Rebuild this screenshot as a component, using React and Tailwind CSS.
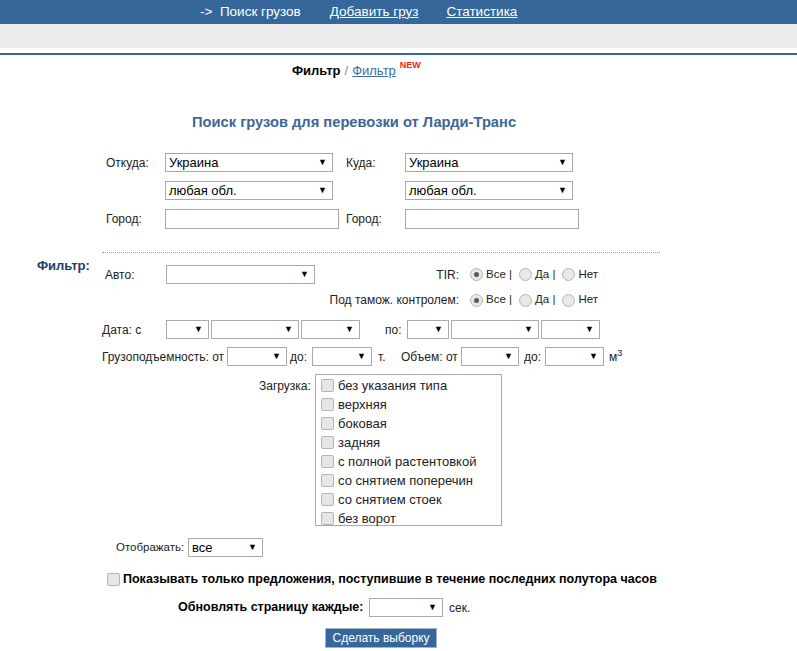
import React from 'react';

const FONT = { fontFamily: '"Liberation Sans", Arial, sans-serif' };

const Select = ({ w, value = '', h = 'h-[19px]' }) => (
  <div className={`${w} ${h} shrink-0 flex items-center justify-between border border-[#a9a9a9] bg-white pl-[3px] pr-[5px] text-[13px] text-black`}>
    <span className="leading-none">{value}</span>
    <span className="text-[9px] leading-none">▼</span>
  </div>
);

const Radio = ({ checked }) => (
  <span className="inline-flex items-center justify-center w-[13px] h-[13px] rounded-full border border-[#b5b5b5] bg-[#e8e8e8] shrink-0">
    {checked && <span className="w-[5px] h-[5px] rounded-full bg-[#5a5a5a]" />}
  </span>
);

const Check = () => (
  <span className="inline-block w-[13px] h-[13px] rounded-[2px] border border-[#b5b5b5] bg-[#e6e6e6] shrink-0" />
);

const RadioGroup = () => (
  <div className="ml-[11px] flex items-center text-[11.5px] text-[#222]">
    <Radio checked />
    <span className="ml-[3px]">Все&nbsp;|</span>
    <span className="ml-[7px] flex"><Radio /></span>
    <span className="ml-[3px]">Да&nbsp;|</span>
    <span className="ml-[7px] flex"><Radio /></span>
    <span className="ml-[3px]">Нет</span>
  </div>
);

const zagruzka = [
  'без указания типа',
  'верхняя',
  'боковая',
  'задняя',
  'с полной растентовкой',
  'со снятием поперечин',
  'со снятием стоек',
  'без ворот'
];

export default function App() {
  return (
    <div className="w-[797px] min-h-[651px] bg-white text-[12px] text-[#222]" style={FONT}>
      {/* верхнее меню */}
      <div className="h-[24px] bg-[#35679a] flex items-center pl-[200px] text-[13.5px] text-white">
        <span>-&gt;&nbsp; Поиск грузов</span>
        <a className="ml-[29px] underline">Добавить груз</a>
        <a className="ml-[28px] underline">Статистика</a>
      </div>
      <div className="h-[24px] bg-[#ececec]" />
      <div className="mt-[5px] h-[2px] bg-[#35679a]" />

      <div className="mt-[8px] h-[16px] flex items-center pl-[292px] text-[13px]">
        <b className="text-black">Фильтр</b>
        <span className="mx-[4px] text-[#888]">/</span>
        <a className="underline text-[#3a6ea5]">Фильтр</a>
        <sup className="ml-[4px] -mt-[4px] text-[9px] font-bold text-[#ff2020]">NEW</sup>
      </div>

      <h1 className="mt-[35px] h-[16px] flex items-center pl-[192px] text-[14.7px] font-bold text-[#3a6795]">
        Поиск грузов для перевозки от Ларди-Транс
      </h1>

      {/* откуда / куда */}
      <div className="mt-[23px] pl-[106px] flex flex-col gap-[9px]">
        <div className="flex items-center">
          <span className="w-[59px]">Откуда:</span>
          <Select w="w-[168px]" value="Украина" />
          <span className="ml-[13px] w-[59px]">Куда:</span>
          <Select w="w-[168px]" value="Украина" />
        </div>
        <div className="flex items-center">
          <span className="w-[59px]" />
          <Select w="w-[168px]" value="любая обл." />
          <span className="ml-[13px] w-[59px]" />
          <Select w="w-[168px]" value="любая обл." />
        </div>
        <div className="flex items-center">
          <span className="w-[59px]">Город:</span>
          <div className="w-[174px] h-[20px] border border-[#a9a9a9] bg-white" />
          <span className="ml-[7px] w-[59px]">Город:</span>
          <div className="w-[174px] h-[20px] border border-[#a9a9a9] bg-white" />
        </div>
      </div>

      <div className="mt-[23px] ml-[102px] w-[558px] border-t border-dotted border-[#999]" />

      {/* фильтр */}
      <div className="mt-[12px] pl-[37px] flex items-start">
        <b className="w-[68px] -mt-[9px] text-[13px] text-[#1b3e6a]">Фильтр:</b>
        <div className="flex items-center h-[19px]">
          <span className="w-[61px]">Авто:</span>
          <Select w="w-[149px]" />
          <span className="w-[144px] text-right">TIR:</span>
          <RadioGroup />
        </div>
      </div>

      <div className="mt-[7px] h-[18px] pl-[315px] flex items-center">
        <span className="w-[144px] text-right whitespace-nowrap">Под тамож. контролем:</span>
        <RadioGroup />
      </div>

      <div className="mt-[11px] pl-[102px] flex items-center">
        <span className="w-[64px]">Дата: с</span>
        <Select w="w-[43px]" />
        <span className="ml-[2px]"><Select w="w-[88px]" /></span>
        <span className="ml-[2px]"><Select w="w-[59px]" /></span>
        <span className="ml-[25px] w-[22px]">по:</span>
        <Select w="w-[42px]" />
        <span className="ml-[2px]"><Select w="w-[88px]" /></span>
        <span className="ml-[2px]"><Select w="w-[59px]" /></span>
      </div>

      <div className="mt-[8px] pl-[102px] flex items-center">
        <span className="w-[125px]">Грузоподъемность: от</span>
        <Select w="w-[60px]" />
        <span className="ml-[3px] w-[22px]">до:</span>
        <Select w="w-[60px]" />
        <span className="ml-[6px] w-[23px]">т.</span>
        <span className="w-[60px]">Объем: от</span>
        <Select w="w-[58px]" />
        <span className="ml-[5px] w-[21px]">до:</span>
        <Select w="w-[59px]" />
        <span className="ml-[5px]">м<sup className="text-[9px]">3</sup></span>
      </div>

      <div className="mt-[8px] pl-[259px] flex items-start">
        <span className="w-[56px] mt-[3px]">Загрузка:</span>
        <div className="w-[187px] h-[152px] border border-[#a9a9a9] pt-[1px] pl-[5px]">
          {zagruzka.map((item) => (
            <div key={item} className="h-[19px] flex items-center text-[13px] text-[#222]">
              <Check />
              <span className="ml-[4px]">{item}</span>
            </div>
          ))}
        </div>
      </div>

      <div className="mt-[12px] pl-[116px] flex items-center">
        <span className="w-[72px] text-[11.5px] whitespace-nowrap">Отображать:</span>
        <Select w="w-[75px]" value="все" />
      </div>

      <div className="mt-[14px] h-[16px] pl-[107px] flex items-center">
        <Check />
        <b className="ml-[3px] text-[12.5px] text-black whitespace-nowrap">
          Показывать только предложения, поступившие в течение последних полутора часов
        </b>
      </div>

      <div className="mt-[11px] pl-[178px] flex items-center">
        <b className="w-[191px] text-[12.5px] text-black whitespace-nowrap">Обновлять страницу каждые:</b>
        <Select w="w-[74px]" />
        <span className="ml-[6px]">сек.</span>
      </div>

      <div className="mt-[11px] pl-[325px]">
        <button
          type="button"
          className="w-[112px] h-[20px] bg-[#35679a] border border-[#a7b3c2] text-white text-[12px] leading-none"
        >
          Сделать выборку
        </button>
      </div>
    </div>
  );
}
